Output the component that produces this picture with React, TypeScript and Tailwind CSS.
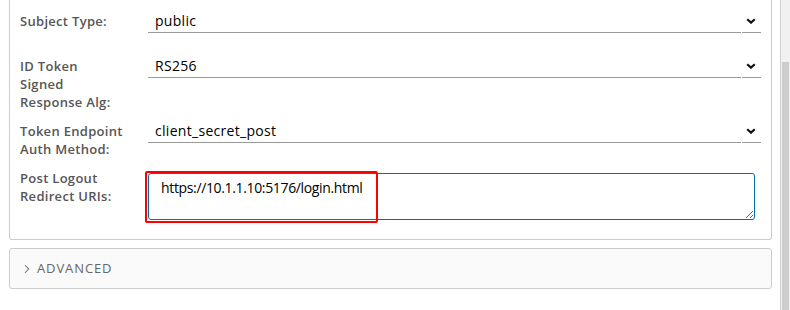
import { ChevronRight } from 'lucide-react'

function SelectField({ value }: { value: string }) {
  return (
    <div className="flex h-[24px] flex-1">
      <div className="flex flex-1 items-center border-b border-[#9a9a9a] pl-[7px] text-[14px] tracking-[0.3px] text-black">
        {value}
      </div>
      <div className="ml-px flex w-[19px] items-center justify-center border-b border-[#9a9a9a]">
        <svg width="10" height="6" viewBox="0 0 10 6" className="mr-[1px]">
          <path d="M1.2 1.2 L5 4.6 L8.8 1.2" fill="none" stroke="#111" strokeWidth="2.2" />
        </svg>
      </div>
    </div>
  )
}

function Label({ children }: { children: React.ReactNode }) {
  return (
    <div className="w-[128px] shrink-0 text-[13px] font-semibold leading-[18px] tracking-[0.3px] text-[#565656]">
      {children}
    </div>
  )
}

export default function App() {
  return (
    <div className="flex h-[310px] w-[790px] overflow-hidden bg-white font-['Open_Sans',sans-serif]">
      <div className="w-[780px]">
        <div className="ml-[9px] w-[763px] rounded-b-[3px] border border-t-0 border-[#cccccc] bg-white px-[10px] pt-[9px] pb-[19px]">
          <div className="flex">
            <div className="pt-[3px]">
              <Label>Subject Type:</Label>
            </div>
            <SelectField value="public" />
          </div>

          <div className="mt-[21px] flex">
            <div className="pt-[3px]">
              <Label>
                ID Token
                <br />
                Signed
                <br />
                Response Alg:
              </Label>
            </div>
            <SelectField value="RS256" />
          </div>

          <div className="mt-[8px] flex">
            <div className="pt-[3px]">
              <Label>
                Token Endpoint
                <br />
                Auth Method:
              </Label>
            </div>
            <SelectField value="client_secret_post" />
          </div>

          <div className="mt-[11px] flex">
            <Label>
              Post Logout
              <br />
              Redirect URIs:
            </Label>
            <div className="relative mt-[4px]">
              <textarea
                readOnly
                defaultValue="https://10.1.1.10:5176/login.html"
                className="block h-[47px] w-[607px] rounded-[3px] border border-[#0072a3] px-[12px] py-[4px] text-[14px] leading-[20px] tracking-[-0.35px] text-black outline-none"
              />
              <div className="pointer-events-none absolute -left-[3px] -top-[2px] h-[52px] w-[233px] rounded-[2px] border-[2.5px] border-[#ff0000]" />
            </div>
          </div>
        </div>

        <div className="mt-[8px] ml-[9px] flex h-[41px] w-[763px] items-center rounded-[3px] border border-[#cccccc] bg-[#fafafa] pl-[10px]">
          <ChevronRight className="h-[14px] w-[14px] text-[#666]" strokeWidth={1.8} />
          <span className="ml-[3px] text-[13px] tracking-[0.9px] text-[#666]">ADVANCED</span>
        </div>
      </div>

      <div className="flex w-[10px] flex-col border-l border-[#cfcfcf] bg-[#f1f1f1]">
        <div className="h-[62px]" />
        <div className="mx-[1px] flex-1 bg-[#cdcdcd]" />
      </div>
    </div>
  )
}
